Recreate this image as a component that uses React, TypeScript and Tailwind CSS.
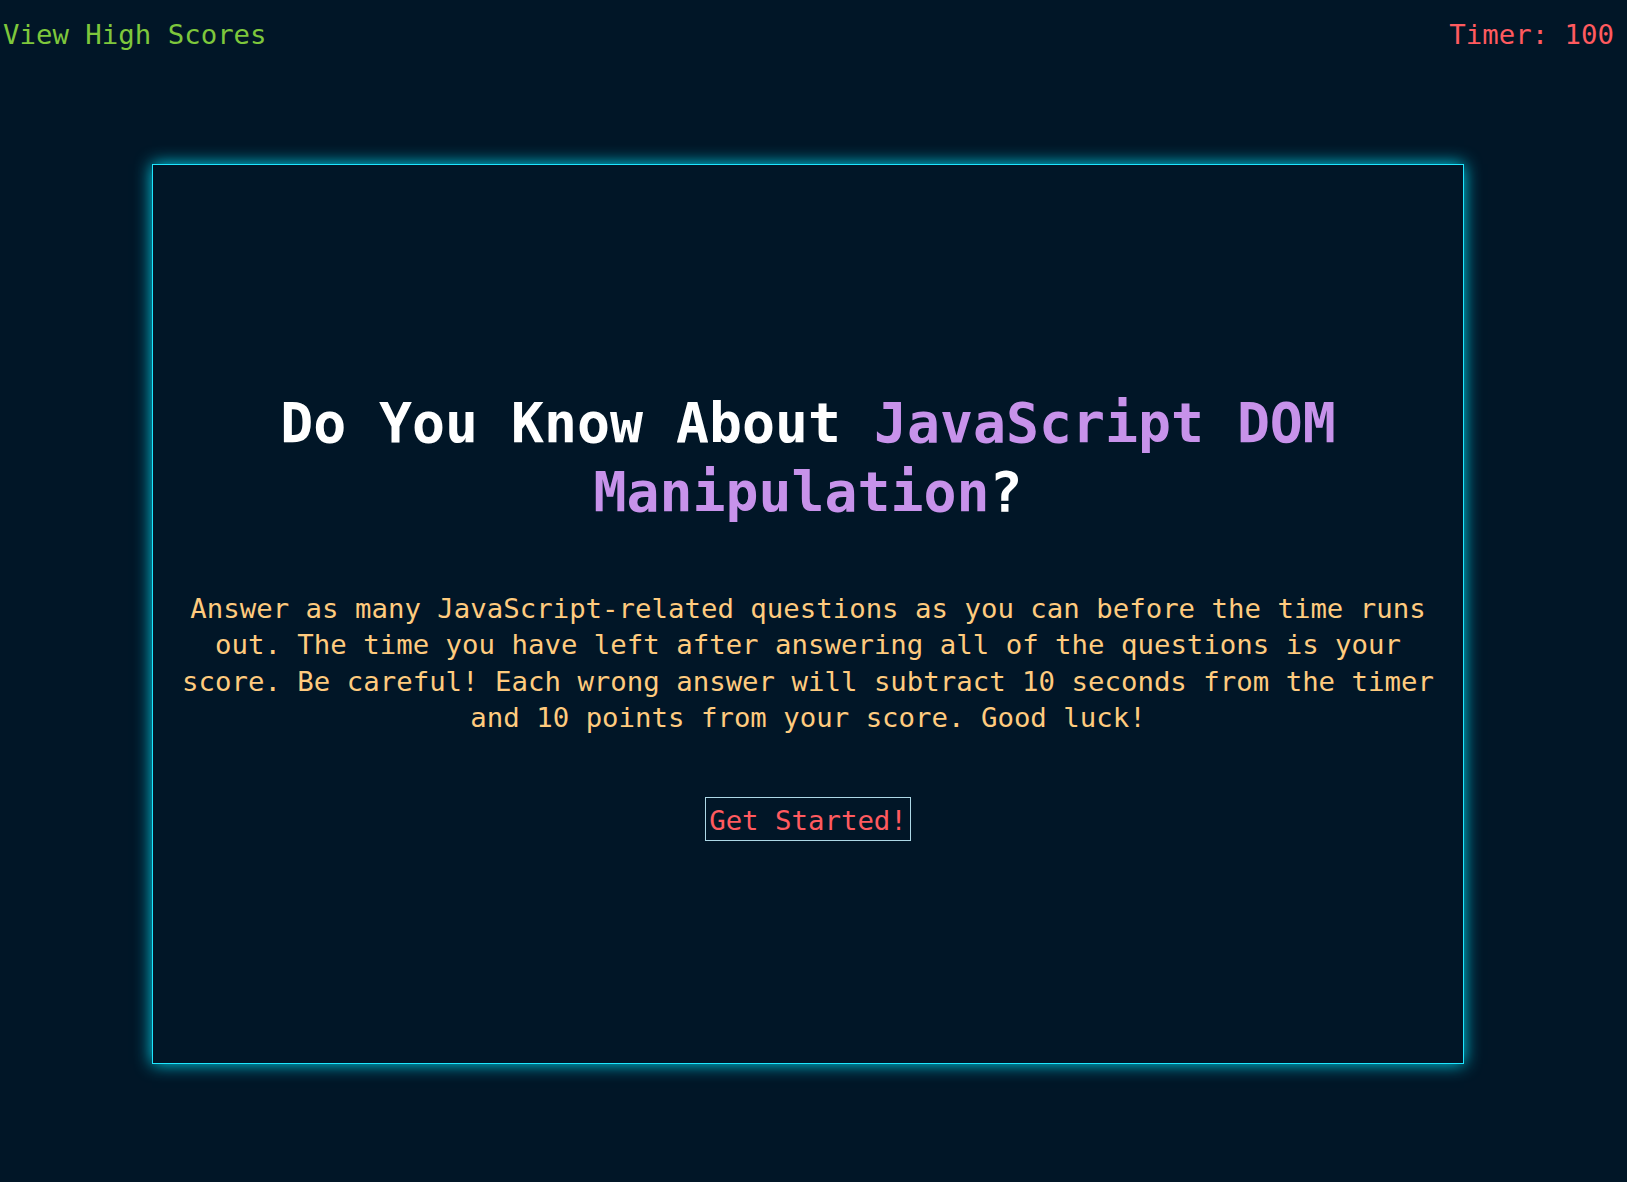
export default function App() {
  return (
    <div className="min-h-[1182px] w-full bg-[#011627] font-['DejaVu_Sans_Mono',monospace] text-[27.36px]">
      <header className="flex items-start justify-between pt-[17px] pl-[3px] pr-[13px] leading-[36px]">
        <a className="text-[#7ec73c]">View High Scores</a>
        <span className="text-[#ff5a5f]">Timer: 100</span>
      </header>

      <main className="ml-[152px] mt-[111px] flex h-[900px] w-[1312px] flex-col items-center border border-[#1ee6ff] pt-[224px] shadow-[0_0_16px_#00d8f0]">
        <h1 className="text-center text-[54.8px] font-bold leading-[69px] text-white">
          Do You Know About <span className="text-[#c792ea]">JavaScript DOM Manipulation</span>?
        </h1>
        <p className="mt-[64px] w-[1290px] text-center leading-[36.3px] text-[#ffcb7e]">
          Answer as many JavaScript-related questions as you can before the time runs out. The time you have left after answering all of the questions is your score. Be careful! Each wrong answer will subtract 10 seconds from the timer and 10 points from your score. Good luck!
        </p>
        <button className="mt-[61px] border border-[#add8e6] px-[3px] pt-[5px] pb-[2px] leading-[35px] text-[#ff5a5f]">
          Get Started!
        </button>
      </main>
    </div>
  );
}
